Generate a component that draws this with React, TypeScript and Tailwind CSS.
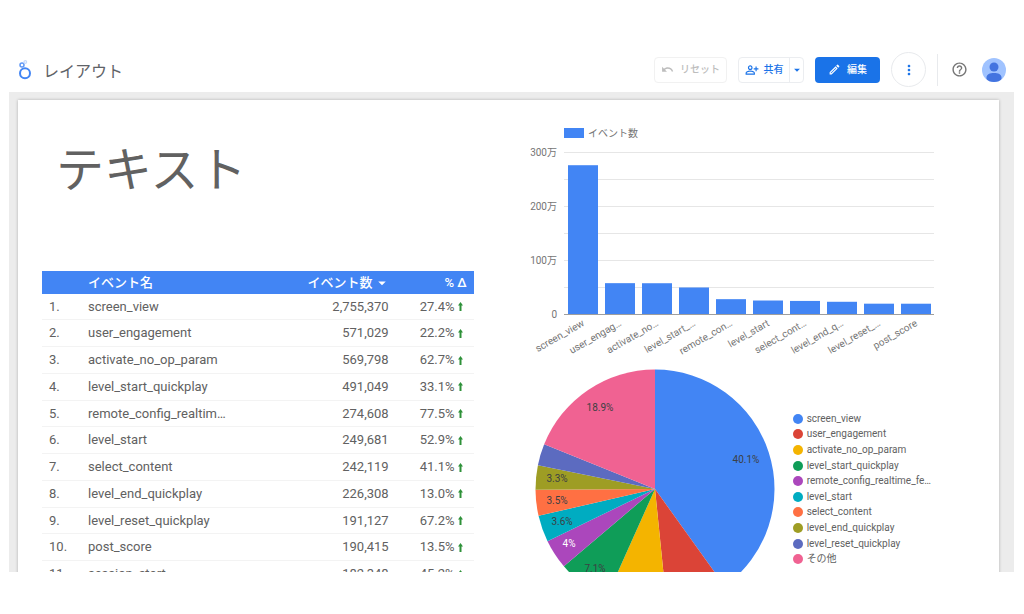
import {
  MdArrowDropDown,
  MdHelpOutline,
  MdMoreVert,
  MdOutlineModeEdit,
  MdOutlinePersonAddAlt,
  MdUndo,
} from "react-icons/md";

const events = [
  { name: "screen_view", count: "2,755,370", delta: "27.4%" },
  { name: "user_engagement", count: "571,029", delta: "22.2%" },
  { name: "activate_no_op_param", count: "569,798", delta: "62.7%" },
  { name: "level_start_quickplay", count: "491,049", delta: "33.1%" },
  { name: "remote_config_realtim…", count: "274,608", delta: "77.5%" },
  { name: "level_start", count: "249,681", delta: "52.9%" },
  { name: "select_content", count: "242,119", delta: "41.1%" },
  { name: "level_end_quickplay", count: "226,308", delta: "13.0%" },
  { name: "level_reset_quickplay", count: "191,127", delta: "67.2%" },
  { name: "post_score", count: "190,415", delta: "13.5%" },
  { name: "session_start", count: "182,348", delta: "45.2%" },
];

const bars = [
  { label: "screen_view", value: 2755370 },
  { label: "user_engag…", value: 571029 },
  { label: "activate_no…", value: 569798 },
  { label: "level_start_…", value: 491049 },
  { label: "remote_con…", value: 274608 },
  { label: "level_start", value: 249681 },
  { label: "select_cont…", value: 242119 },
  { label: "level_end_q…", value: 226308 },
  { label: "level_reset_…", value: 191127 },
  { label: "post_score", value: 190415 },
];

const slices = [
  { label: "screen_view", share: 40.1, color: "#4285f4", text: "40.1%", x: 211, y: 91 },
  { label: "user_engagement", share: 8.3, color: "#db4437" },
  { label: "activate_no_op_param", share: 8.3, color: "#f4b400" },
  { label: "level_start_quickplay", share: 7.1, color: "#0f9d58", text: "7.1%", x: 60, y: 200 },
  { label: "remote_config_realtime_fe…", share: 4, color: "#ab47bc", text: "4%", x: 34, y: 175, light: true },
  { label: "level_start", share: 3.6, color: "#00acc1", text: "3.6%", x: 27, y: 153 },
  { label: "select_content", share: 3.5, color: "#ff7043", text: "3.5%", x: 22, y: 132 },
  { label: "level_end_quickplay", share: 3.3, color: "#9e9d24", text: "3.3%", x: 22, y: 110 },
  { label: "level_reset_quickplay", share: 2.9, color: "#5c6bc0" },
  { label: "その他", share: 18.9, color: "#f06292", text: "18.9%", x: 65, y: 39 },
];

function Logo() {
  return (
    <svg viewBox="0 0 14 20" className="h-5 w-[14px]" fill="none">
      <circle cx="7" cy="13.2" r="5" stroke="#4285f4" strokeWidth="2" />
      <circle cx="4" cy="5" r="2" stroke="#5e97f6" strokeWidth="1.5" />
      <circle cx="7.3" cy="2" r="1.3" stroke="#c6dafc" strokeWidth="1.3" />
    </svg>
  );
}

function Avatar() {
  return (
    <svg viewBox="0 0 24 24" className="size-6">
      <clipPath id="avatar">
        <circle cx="12" cy="12" r="12" />
      </clipPath>
      <g clipPath="url(#avatar)">
        <rect width="24" height="24" fill="#a0c3ff" />
        <circle cx="12" cy="9" r="4.5" fill="#4374e0" />
        <path d="M4.5 19.5c0-3.200 3.400-4.500 7.500-4.500s7.500 1.300 7.500 4.500v4.500h-15z" fill="#4374e0" />
      </g>
    </svg>
  );
}

function Header() {
  return (
    <header className="flex h-11 shrink-0 items-center pb-px">
      <div className="flex flex-1 items-center gap-[11px] pl-[9px]">
        <Logo />
        <h1 className="pt-1 text-base text-[#5f6368]">レイアウト</h1>
      </div>
      <div className="flex items-center text-[10px] font-medium">
        <button
          disabled
          className="flex h-[26px] w-[73px] items-center justify-center gap-[6px] rounded-sm border border-[#f1f1f1] text-[#bdbdbd]"
        >
          <MdUndo className="size-[13px]" />
          リセット
        </button>
        <div className="ml-[11px] flex h-[26px] rounded-sm border border-[#ebedf0] text-[#1a73e8]">
          <button className="flex w-[50px] items-center justify-center gap-[5px]">
            <MdOutlinePersonAddAlt className="size-[14px]" />
            共有
          </button>
          <button
            aria-label="共有オプション"
            className="flex w-[14px] items-center justify-center border-l border-[#ebedf0]"
          >
            <MdArrowDropDown className="size-[14px] shrink-0" />
          </button>
        </div>
        <button className="ml-[11px] flex h-[26px] w-[65px] items-center justify-center gap-[6px] rounded-sm bg-[#1a73e8] text-white">
          <MdOutlineModeEdit className="size-[13px]" />
          編集
        </button>
        <button
          aria-label="その他のオプション"
          className="ml-[11px] flex size-[35px] items-center justify-center rounded-full border border-[#e8eaed] text-[#1a73e8]"
        >
          <MdMoreVert className="size-4" />
        </button>
        <div className="ml-[11px] h-8 w-px bg-[#e8eaed]" />
        <button aria-label="ヘルプ" className="ml-[13px] text-[#757575]">
          <MdHelpOutline className="size-[17px]" />
        </button>
        <button aria-label="アカウント" className="mr-2 ml-[14px]">
          <Avatar />
        </button>
      </div>
    </header>
  );
}

function EventTable() {
  return (
    <table className="h-[317px] w-full table-fixed text-[13px] leading-4 text-[#616161]">
      <thead>
        <tr className="h-[23px] bg-[#4285f4] text-white">
          <th className="w-[46px]" aria-label="順位" />
          <th className="p-0 text-left font-medium">イベント名</th>
          <th className="w-[90px] p-0 text-right font-medium">
            <span className="-mr-[2px] inline-flex items-center">
              イベント数
              <MdArrowDropDown className="size-[18px]" />
            </span>
          </th>
          <th className="w-[85px] p-0 pr-[7px] text-right font-medium">% Δ</th>
        </tr>
      </thead>
      <tbody>
        {events.map((event, i) => (
          <tr key={event.name} className="border-b border-[#f3f3f3]">
            <td className="p-0 pl-[7px]">{i + 1}.</td>
            <td className="p-0">{event.name}</td>
            <td className="p-0 text-right">{event.count}</td>
            <td className="p-0 pr-[11px]">
              <div className="flex items-center justify-end gap-[3px]">
                {event.delta}
                <svg viewBox="0 0 5 9" className="h-[9px] w-[5px]" fill="#2e9139">
                  <path d="M2.5 0 5 3.500H3.500V9h-2V3.500H0z" />
                </svg>
              </div>
            </td>
          </tr>
        ))}
      </tbody>
    </table>
  );
}

function BarChart() {
  const baseline = 194;
  const step = 27;
  return (
    <svg viewBox="0 0 420 240" className="h-[240px] w-[420px]" fontSize="10" fill="#757575">
      <rect x="44" y="8" width="20" height="10" fill="#4285f4" />
      <text x="68" y="17">イベント数</text>
      {[1, 2, 3, 4, 5, 6].map((n) => (
        <rect key={n} x="44" y={baseline - n * step} width="370" height="1" fill="#e6e6e6" />
      ))}
      {["0", "100万", "200万", "300万"].map((label, i) => (
        <text key={label} x="37" y={baseline + 4 - i * step * 2} textAnchor="end">
          {label}
        </text>
      ))}
      {bars.map((bar, i) => {
        const height = (bar.value / 3000000) * step * 6;
        return (
          <rect key={bar.label} x={48 + i * 37} y={baseline - height} width="30" height={height} fill="#4285f4" />
        );
      })}
      <rect x="44" y={baseline} width="370" height="1" fill="#9e9e9e" />
      {bars.map((bar, i) => (
        <text key={bar.label} textAnchor="end" transform={`translate(${65 + i * 37} 205) rotate(-30)`}>
          {bar.label}
        </text>
      ))}
    </svg>
  );
}

function PieChart() {
  const point = (percent: number) => {
    const angle = (percent / 100) * Math.PI * 2;
    return `${120 + 119.5 * Math.sin(angle)} ${120 - 119.5 * Math.cos(angle)}`;
  };
  let start = 0;
  return (
    <svg viewBox="0 0 240 240" className="size-[240px] shrink-0" fontSize="10" textAnchor="middle">
      {slices.map((slice) => {
        const from = point(start);
        start += slice.share;
        return (
          <path key={slice.label} d={`M120 120L${from}A119.5 119.5 0 0 1 ${point(start)}z`} fill={slice.color} />
        );
      })}
      {slices
        .filter((slice) => slice.text)
        .map((slice) => (
          <text key={slice.label} x={slice.x} y={slice.y! + 3} fill={slice.light ? "#ffffff" : "#3c4043"}>
            {slice.text}
          </text>
        ))}
    </svg>
  );
}

function Legend() {
  return (
    <ul className="mt-[42px] grid h-[156px] grid-rows-10 text-[10px] leading-none text-[#616161]">
      {slices.map((slice) => (
        <li key={slice.label} className="flex items-center gap-1 whitespace-nowrap">
          <span className="size-[10px] rounded-full" style={{ backgroundColor: slice.color }} />
          {slice.label}
        </li>
      ))}
    </ul>
  );
}

export default function App() {
  return (
    <div className="flex h-screen flex-col overflow-hidden bg-white pt-12 pr-[10px] pb-[42px] pl-[9px] font-['Roboto','Noto_Sans_CJK_JP',sans-serif]">
      <Header />
      <main className="min-h-0 flex-1 overflow-hidden bg-[#ececec] pt-2 pr-[15px] pl-[9px]">
        <div className="flex min-h-full bg-white shadow-[0_0_3px_rgba(0,0,0,0.25)]">
          <section className="ml-6 w-[44%]">
            <h2 className="h-[171px] pt-[38px] pl-[14px] text-5xl leading-[66px] text-[#616161]">テキスト</h2>
            <EventTable />
          </section>
          <section className="ml-[46px] flex-1 pt-5">
            <BarChart />
            <div className="mt-[9px] flex gap-[18px] pl-[15px]">
              <PieChart />
              <Legend />
            </div>
          </section>
        </div>
      </main>
    </div>
  );
}
